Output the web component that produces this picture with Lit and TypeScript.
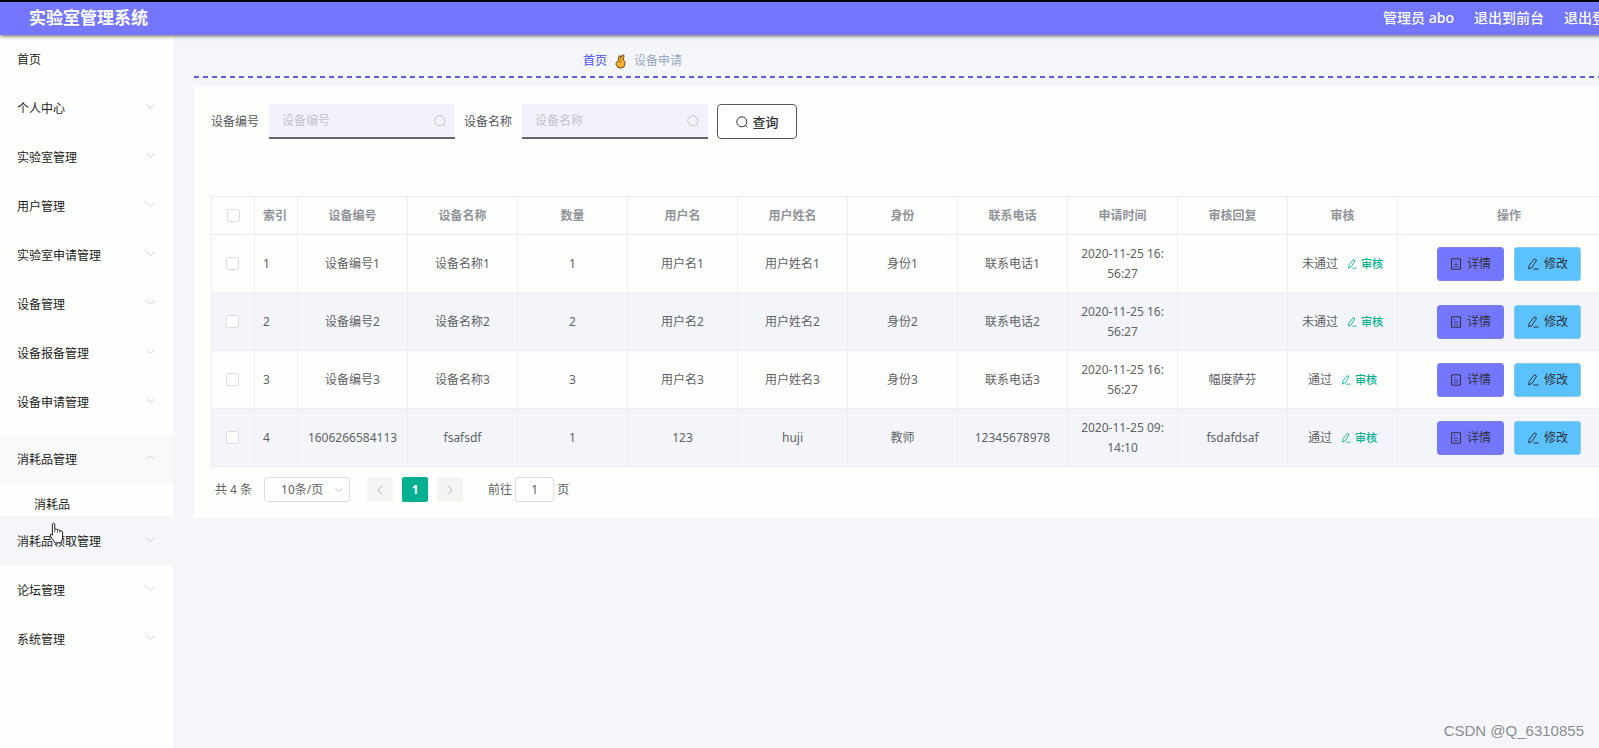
import { LitElement, html, css, svg, nothing } from "lit";
import { customElement } from "lit/decorators.js";
import { classMap } from "lit/directives/class-map.js";

interface NavItem {
  label: string;
  state?: "open" | "hover";
  children?: string[];
}

interface Row {
  no: string;
  name: string;
  count: number;
  user: string;
  realName: string;
  role: string;
  phone: string;
  time: [string, string];
  reply: string;
  passed: boolean;
}

const NAV: NavItem[] = [
  { label: "个人中心" },
  { label: "实验室管理" },
  { label: "用户管理" },
  { label: "实验室申请管理" },
  { label: "设备管理" },
  { label: "设备报备管理" },
  { label: "设备申请管理" },
  { label: "消耗品管理", state: "open", children: ["消耗品"] },
  { label: "消耗品领取管理", state: "hover" },
  { label: "论坛管理" },
  { label: "系统管理" },
];

const HEADS = ["设备编号", "设备名称", "数量", "用户名", "用户姓名", "身份", "联系电话", "申请时间", "审核回复", "审核"];

const sample = (n: number, reply: string, passed: boolean): Row => ({
  no: `设备编号${n}`,
  name: `设备名称${n}`,
  count: n,
  user: `用户名${n}`,
  realName: `用户姓名${n}`,
  role: `身份${n}`,
  phone: `联系电话${n}`,
  time: ["2020-11-25 16:", "56:27"],
  reply,
  passed,
});

const ROWS: Row[] = [
  sample(1, "", false),
  sample(2, "", false),
  sample(3, "幅度萨芬", true),
  {
    no: "1606266584113",
    name: "fsafsdf",
    count: 1,
    user: "123",
    realName: "huji",
    role: "教师",
    phone: "12345678978",
    time: ["2020-11-25 09:", "14:10"],
    reply: "fsdafdsaf",
    passed: true,
  },
];

const icon = (name: string, body: unknown) =>
  html`<svg class="icon ${name}" viewBox="0 0 12 12" aria-hidden="true">${body}</svg>`;
const chevron = (name: string) => icon(name, svg`<path d="M1.5 4l4.5 4 4.5-4" />`);
const searchIcon = (name = "") =>
  icon(name, svg`<circle cx="5.8" cy="5.8" r="5" /><path d="M9.3 9.5l2 1.8" />`);
const editIcon = () =>
  icon("", svg`<path d="M7.4 .8l2.2 1.3-4.6 7.3-3.3 1.5.5-3.4zM6.4 11h5.2" />`);
const docIcon = () =>
  icon("", svg`<path d="M1.5 .8h9v10.4h-9z" /><path d="M3.5 3.7h2M3.5 6.3h5M3.5 8.7h5" opacity=".7" />`);

@customElement("app-root")
export class AppRoot extends LitElement {
  static styles = css`
    :host {
      display: block;
      position: relative;
      min-height: 100vh;
      overflow: hidden;
      background: #f5f6f9;
      color: #606266;
      font: 12px/20px "Noto Sans", "Noto Sans CJK SC", sans-serif;
    }
    * { box-sizing: border-box; }
    ul { list-style: none; margin: 0; padding: 0; }
    a { color: inherit; text-decoration: none; }
    button, input, select { font: inherit; color: inherit; margin: 0; }
    .icon { width: 12px; height: 12px; flex: none; fill: none; stroke: currentColor; stroke-width: 1; }
    .shell { width: calc(100% + 60px); min-height: 100vh; display: flex; flex-direction: column; }

    .top {
      position: relative;
      z-index: 1;
      display: flex;
      align-items: center;
      justify-content: space-between;
      height: 35px;
      padding: 0 39px 1px 29px;
      border-top: 2px solid #000;
      background: #7477fd;
      box-shadow: 0 1px 4px rgba(60, 60, 40, 0.8);
      color: #fff;
    }
    .title { margin: 0; font-size: 17px; line-height: 24px; font-weight: 700; }
    .account { display: flex; gap: 20px; font-size: 14px; font-weight: 500; }

    .body { flex: 1; display: flex; }
    .side { flex: none; width: 173px; background: #fefefd; color: #1c1d20; }
    .link { display: flex; align-items: center; justify-content: space-between; height: 49px; padding: 2px 17px 0; }
    .home { height: 48px; }
    .link .icon { width: 11px; height: 11px; margin-bottom: 4px; color: #cfd1d6; }
    .up { transform: rotate(180deg); }
    .open { margin-top: 8px; }
    .open > .link { background: #f9f9fc; }
    .hover > .link { background: #f5f5fa; }
    .sub { display: block; padding: 12px 34px 1px; }

    .main { flex: 1; min-width: 0; padding: 0 20px 0 21px; }
    .crumbs {
      display: flex;
      align-items: center;
      gap: 8px;
      height: 43px;
      padding: 9px 0 0 389px;
      color: #97a8be;
      background: repeating-linear-gradient(90deg, #5c5fd6 0 5px, transparent 5px 9px) bottom / 100% 2px no-repeat;
    }
    .crumbs a { color: #6366ee; font-weight: 500; }
    .hand { width: 11px; height: 15px; }

    .panel { margin-top: 9px; padding: 17px 18px 16px 17px; background: #fefefd; }
    .filter { display: flex; align-items: center; gap: 9px; height: 35px; color: #55575c; }
    .field { display: flex; align-items: center; gap: 10px; }
    .box {
      display: flex;
      align-items: center;
      width: 186px;
      height: 35px;
      padding: 0 9px 0 13px;
      background: #f3f1fc;
      border-bottom: 2px solid #66666c;
      color: #c0c4cc;
    }
    .box input { flex: 1; min-width: 0; padding: 0; border: 0; background: none; outline: 0; }
    .box input::placeholder { color: #c0c4cc; opacity: 1; }
    .query {
      display: flex;
      align-items: center;
      justify-content: center;
      gap: 5px;
      width: 80px;
      height: 35px;
      padding: 0;
      border: 1px solid #55565a;
      border-radius: 4px;
      background: #fff;
      color: #333;
      font-size: 13px;
      font-weight: 500;
    }

    .grid { width: 100%; margin-top: 57px; table-layout: fixed; border-collapse: collapse; }
    .grid th, .grid td { padding: 0 8px; border: 1px solid #ebeef5; text-align: center; white-space: nowrap; }
    .grid th { height: 38px; color: #909399; font-weight: 700; }
    .grid td { height: 58px; }
    .grid .idx { text-align: left; padding-right: 0; }
    .grid tbody tr:nth-child(even) { background: #f4f5fa; }
    .c-check, .c-idx { width: 43px; }
    .c-text { width: 110px; }
    .tick {
      appearance: none;
      display: block;
      width: 13px;
      height: 13px;
      margin: 0 auto;
      border: 1px solid #dcdfe6;
      border-radius: 2px;
      background: #fff;
    }
    td .tick { margin-left: 6px; }
    .audit { display: flex; align-items: center; justify-content: center; gap: 9px; }
    .audit button {
      display: flex;
      align-items: center;
      gap: 4px;
      padding: 0;
      border: 0;
      background: none;
      color: #00b091;
      font-size: 11px;
      font-weight: 500;
    }
    .audit .icon { width: 10px; height: 10px; }
    .ops { display: flex; justify-content: center; gap: 10px; }
    .op {
      display: flex;
      align-items: center;
      justify-content: center;
      gap: 5px;
      width: 67px;
      height: 34px;
      padding: 0;
      border: 1px solid #7b7eea;
      border-radius: 3px;
      background: #7477fd;
      color: #303340;
    }
    .edit { border-color: #85caf0; background: #5bc2fe; }

    .pager { display: flex; align-items: center; height: 25px; margin-top: 10px; padding-left: 4px; }
    .size { position: relative; display: flex; align-items: center; margin: 0 17px 0 12px; }
    .size select {
      appearance: none;
      width: 86px;
      height: 25px;
      padding: 0 0 0 16px;
      border: 1px solid #dcdfe6;
      border-radius: 3px;
      background: #fff;
    }
    .size .icon { position: absolute; right: 6px; width: 10px; height: 10px; color: #c0c4cc; }
    .pages { display: flex; gap: 9px; margin-right: 25px; }
    .page {
      display: flex;
      align-items: center;
      justify-content: center;
      width: 26px;
      height: 25px;
      padding: 0;
      border: 0;
      border-radius: 2px;
      background: #f4f4f5;
      color: #b4b8c0;
    }
    .current { background: #00b091; color: #fff; font-weight: 700; }
    .prev { transform: rotate(90deg); }
    .next { transform: rotate(-90deg); }
    .jump { display: flex; align-items: center; gap: 3px; }
    .jump input {
      width: 39px;
      height: 25px;
      padding: 0;
      border: 1px solid #dcdfe6;
      border-radius: 3px;
      background: #fff;
      text-align: center;
    }

    .mark {
      position: absolute;
      right: 15px;
      bottom: 7px;
      color: #8c8d90;
      font: 15px/20px "Liberation Sans", sans-serif;
    }
    .pointer { position: absolute; left: 50px; top: 522px; width: 14px; height: 22px; }
  `;

  private nav(item: NavItem) {
    return html`<li class=${classMap({ open: item.state === "open", hover: item.state === "hover" })}>
      <a class="link" href="#">${item.label}${chevron(item.state === "open" ? "up" : "")}</a>
      ${item.children
        ? html`<ul>${item.children.map((c) => html`<li><a class="sub" href="#">${c}</a></li>`)}</ul>`
        : nothing}
    </li>`;
  }

  private field(id: string, label: string) {
    return html`<div class="field">
      <label for=${id}>${label}</label>
      <div class="box"><input id=${id} placeholder=${label} />${searchIcon()}</div>
    </div>`;
  }

  private row(r: Row, i: number) {
    return html`<tr>
      <td><input class="tick" type="checkbox" aria-label="选择 ${i + 1}" /></td>
      <td class="idx">${i + 1}</td>
      <td>${r.no}</td>
      <td>${r.name}</td>
      <td>${r.count}</td>
      <td>${r.user}</td>
      <td>${r.realName}</td>
      <td>${r.role}</td>
      <td>${r.phone}</td>
      <td>${r.time[0]}<br />${r.time[1]}</td>
      <td>${r.reply}</td>
      <td>
        <div class="audit"><span>${r.passed ? "通过" : "未通过"}</span><button>${editIcon()}审核</button></div>
      </td>
      <td>
        <div class="ops">
          <button class="op">${docIcon()}详情</button>
          <button class="op edit">${editIcon()}修改</button>
        </div>
      </td>
    </tr>`;
  }

  render() {
    return html`
      <div class="shell">
        <header class="top">
          <h1 class="title">实验室管理系统</h1>
          <div class="account"><span>管理员 abo</span><a href="#">退出到前台</a><a href="#">退出登录</a></div>
        </header>
        <div class="body">
          <nav class="side">
            <ul>
              <li><a class="link home" href="#">首页</a></li>
              ${NAV.map((n) => this.nav(n))}
            </ul>
          </nav>
          <main class="main">
            <div class="crumbs">
              <a href="#">首页</a>
              <svg class="hand" viewBox="0 0 11 15" aria-hidden="true">
                <path
                  d="M3 7.2L4 2.2Q4.6.8 5.4 2L5.8 3.6 7.2 1.2Q8.8.2 9 1.8L8.4 6Q10.4 7 10 10L8.8 13Q5.6 15.2 2.6 13.2L1 10.4Q.6 8 3 7.2Z"
                  fill="#fcb32c" stroke="#3c2a10" stroke-width=".8" />
                <path d="M5.8 3.8L5.2 6.4M3.6 7.6L6.6 8.2" fill="none" stroke="#7a4d10" stroke-width=".7" />
              </svg>
              <span>设备申请</span>
            </div>
            <section class="panel">
              <form class="filter" @submit=${(e: Event) => e.preventDefault()}>
                ${this.field("device-no", "设备编号")} ${this.field("device-name", "设备名称")}
                <button class="query">${searchIcon()}查询</button>
              </form>
              <table class="grid">
                <colgroup>
                  <col class="c-check" />
                  <col class="c-idx" />
                  ${HEADS.map(() => html`<col class="c-text" />`)}
                  <col />
                </colgroup>
                <thead>
                  <tr>
                    <th><input class="tick" type="checkbox" aria-label="全选" /></th>
                    <th class="idx">索引</th>
                    ${HEADS.map((h) => html`<th>${h}</th>`)}
                    <th>操作</th>
                  </tr>
                </thead>
                <tbody>
                  ${ROWS.map((r, i) => this.row(r, i))}
                </tbody>
              </table>
              <div class="pager">
                <span>共 4 条</span>
                <div class="size">
                  <select aria-label="每页条数"><option>10条/页</option></select>
                  ${chevron("")}
                </div>
                <div class="pages">
                  <button class="page" aria-label="上一页">${chevron("prev")}</button>
                  <button class="page current">1</button>
                  <button class="page" aria-label="下一页">${chevron("next")}</button>
                </div>
                <div class="jump">
                  <label for="jump">前往</label>
                  <input id="jump" value="1" />
                  <span>页</span>
                </div>
              </div>
            </section>
          </main>
        </div>
      </div>
      <div class="mark">CSDN @Q_6310855</div>
      <svg class="pointer" viewBox="0 0 14 22" aria-hidden="true">
        <path
          d="M2.4 2Q3.6.4 4.8 2V7.4Q6.2 6.2 7.4 7.8 8.8 7 10 8.8 11.8 8 12.6 10V15Q12.6 17.6 10.8 20.8H5L.8 14.6Q-.2 12.4 1.2 12L2.4 13.2Z"
          fill="#fff" stroke="#222" stroke-width="1" />
        <path d="M4.8 7.6v3M7.4 8v2.8M10 8.8v2.2" fill="none" stroke="#222" stroke-width=".7" />
      </svg>
    `;
  }
}
